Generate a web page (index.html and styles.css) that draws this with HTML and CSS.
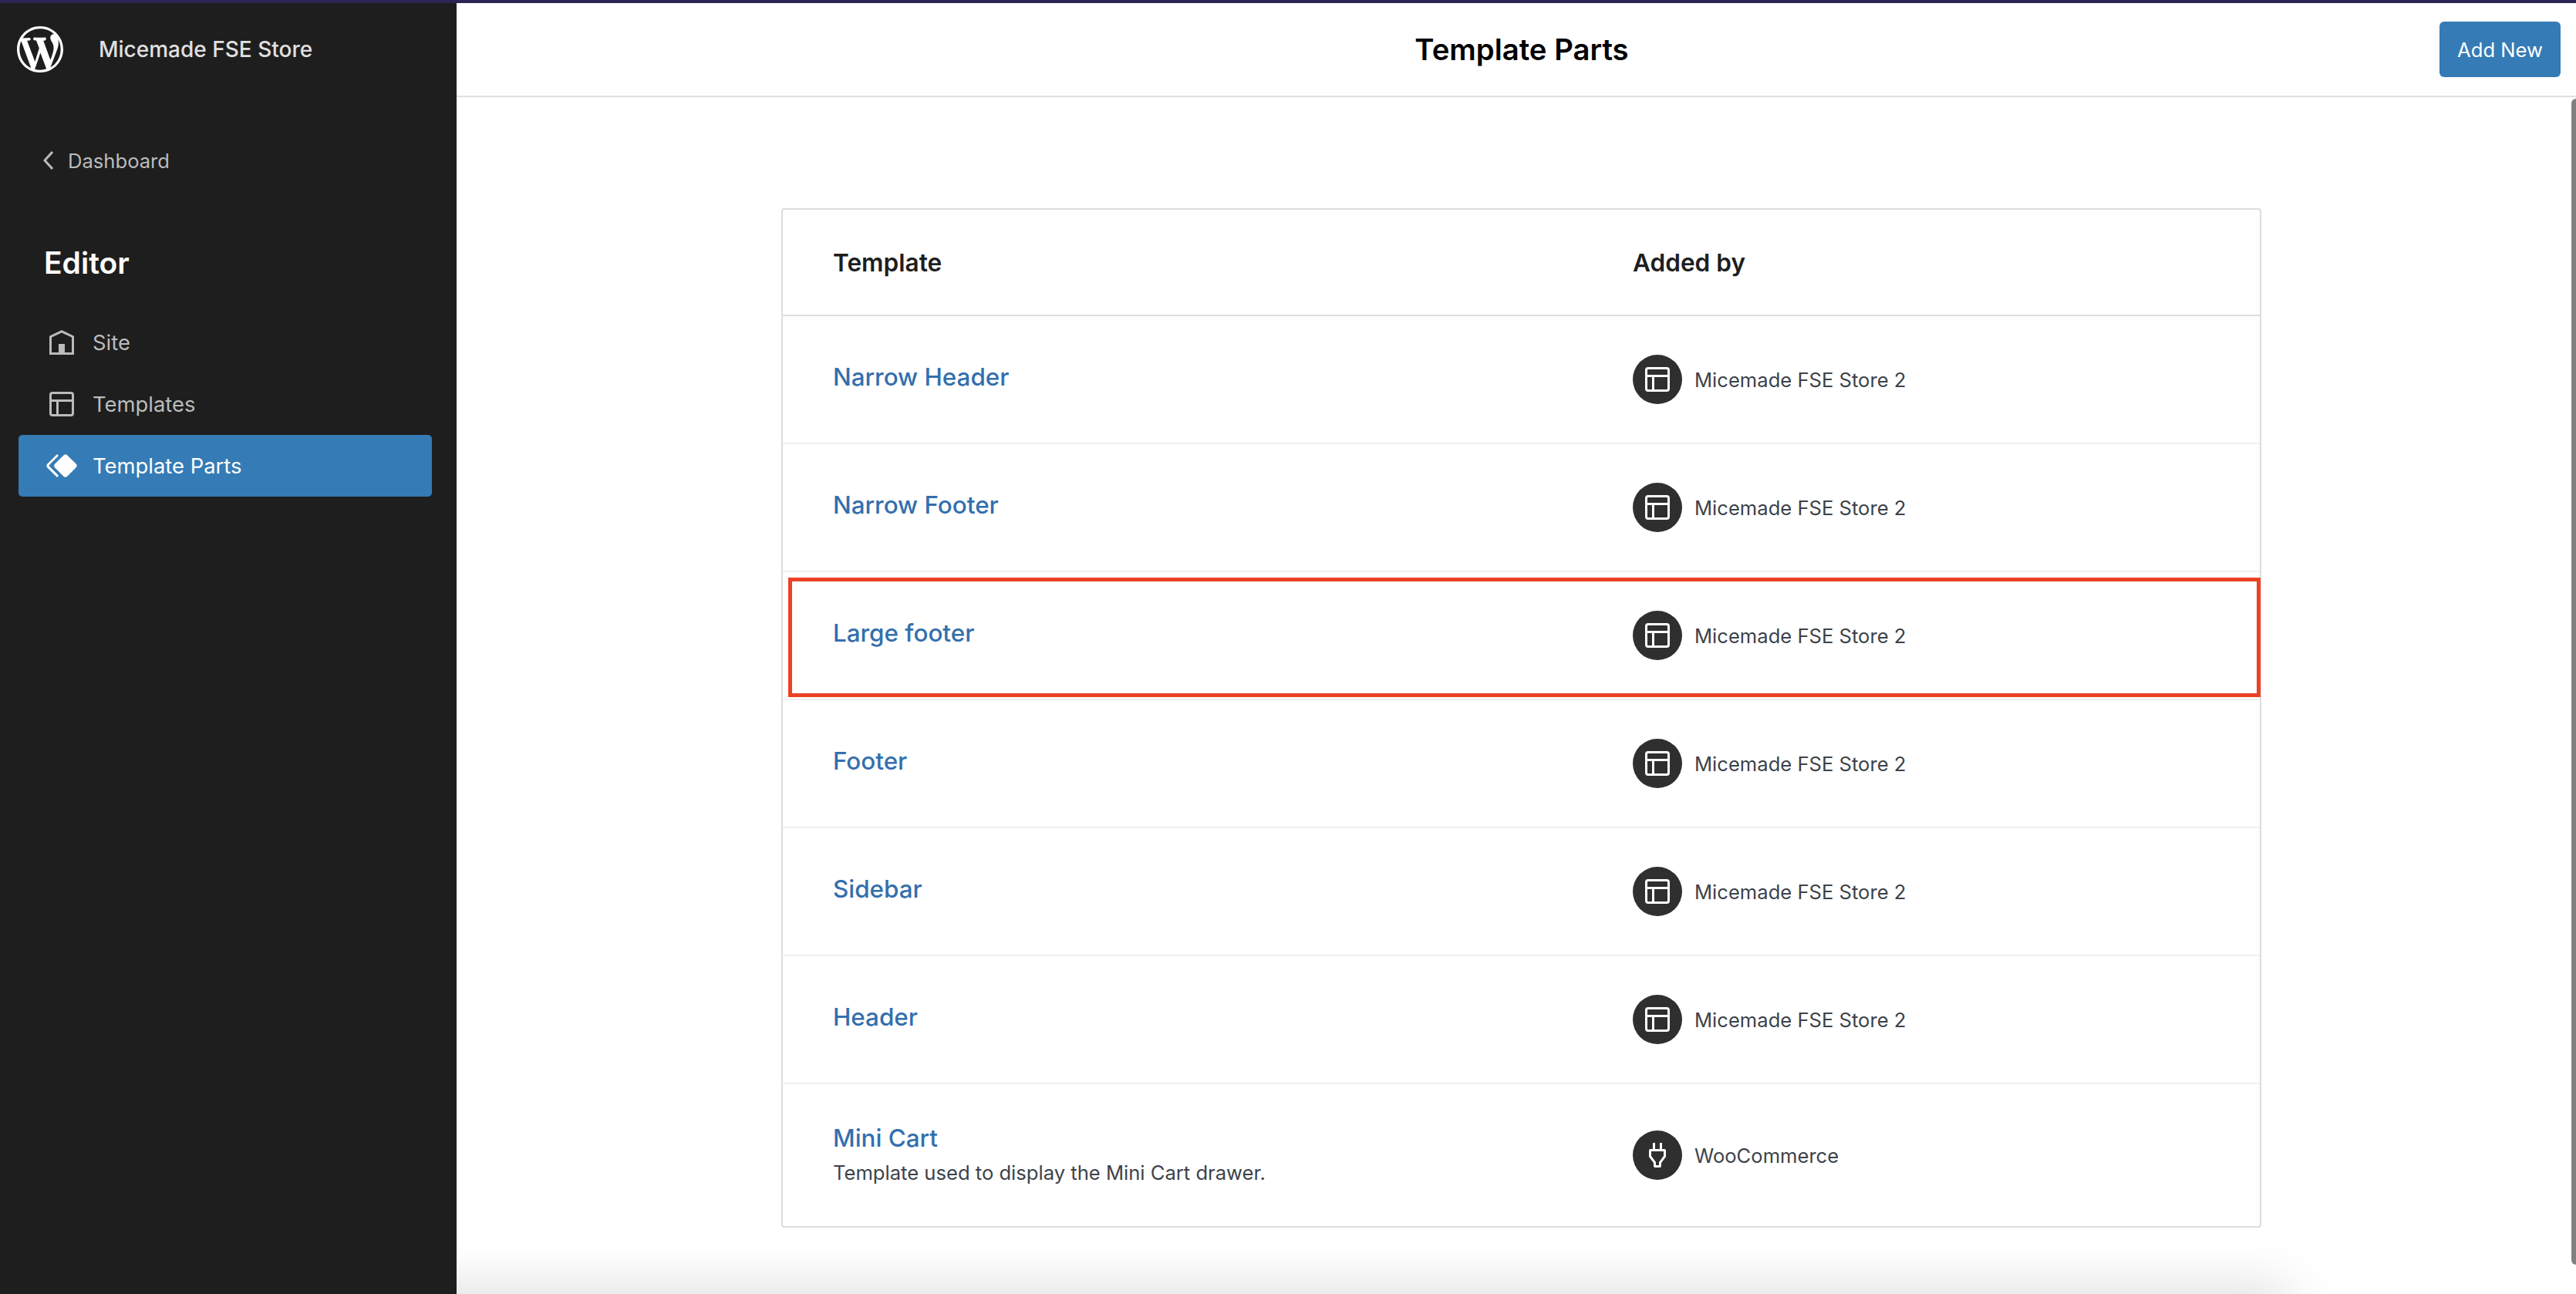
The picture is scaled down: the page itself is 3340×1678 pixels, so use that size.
FILE: index.html
```html
<!DOCTYPE html>
<html lang="en">
<head>
    <meta charset="UTF-8">
    <meta name="viewport" content="width=device-width, initial-scale=1.0">
    <title>Template Parts</title>
    <link rel="stylesheet" href="styles.css">
</head>
<body>
    <div class="top-strip"></div>
    <div class="frame">
        <aside class="sidebar">
            <div class="site-head">
                <svg class="wp-logo" viewBox="0 0 20 20">
                    <path d="M20 10c0-5.51-4.49-10-10-10C4.48 0 0 4.49 0 10c0 5.52 4.48 10 10 10 5.51 0 10-4.48 10-10zM7.78 15.37L4.37 6.22c.55-.02 1.17-.08 1.17-.08.5-.06.44-1.13-.06-1.11 0 0-1.45.11-2.37.11-.18 0-.37 0-.58-.01C4.12 2.69 6.87 1.11 10 1.11c2.33 0 4.45.87 6.05 2.34-.68-.11-1.65.39-1.65 1.58 0 .74.45 1.36.9 2.1.35.61.55 1.36.55 2.46 0 1.49-1.4 5-1.4 5l-3.03-8.37c.54-.02.82-.17.82-.17.5-.05.44-1.25-.06-1.22 0 0-1.44.12-2.38.12-.87 0-2.33-.12-2.33-.12-.5-.03-.56 1.2-.06 1.22l.92.08 1.26 3.41zM17.41 10c.24-.64.74-1.87.43-4.25.7 1.29 1.05 2.71 1.05 4.25 0 3.29-1.73 6.24-4.4 7.78.97-2.59 1.94-5.2 2.92-7.78zM6.1 18.09C3.12 16.65 1.11 13.53 1.11 10c0-1.3.23-2.48.72-3.59C3.25 10.3 4.67 14.2 6.1 18.09zm4.03-6.63l2.58 6.98c-.86.29-1.76.45-2.71.45-.79 0-1.57-.11-2.29-.33.81-2.38 1.62-4.74 2.42-7.1z"/>
                </svg>
                <span class="site-name">Micemade FSE Store</span>
            </div>
            <a class="back-link">
                <svg class="icon" viewBox="0 0 24 24"><path d="M14.6 7l-1.2-1L8 12l5.4 6 1.2-1-4.6-5z"/></svg>
                Dashboard
            </a>
            <h2 class="sidebar-title">Editor</h2>
            <nav class="side-nav">
                <a class="nav-item">
                    <svg class="icon" viewBox="0 0 24 24"><path d="M12 4L4 7.9V20h16V7.9L12 4zm6.5 14.5H14V13h-4v5.5H5.5V8.8L12 5.7l6.5 3.1v9.7z"/></svg>
                    Site
                </a>
                <a class="nav-item">
                    <svg class="icon" viewBox="0 0 24 24"><path d="M18 5.5H6a.5.5 0 00-.5.5v3h13V6a.5.5 0 00-.5-.5zm.5 5H10v8h8a.5.5 0 00.5-.5v-7.5zm-10 0h-3V18a.5.5 0 00.5.5h2.5v-8zM6 4h12a2 2 0 012 2v12a2 2 0 01-2 2H6a2 2 0 01-2-2V6a2 2 0 012-2z"/></svg>
                    Templates
                </a>
                <a class="nav-item active">
                    <svg class="icon" viewBox="0 0 24 24"><path d="M21.3 10.8l-5.6-5.6c-.7-.7-1.8-.7-2.5 0l-5.6 5.6c-.7.7-.7 1.8 0 2.5l5.6 5.6c.3.3.8.5 1.2.5s.9-.2 1.2-.5l5.6-5.6c.8-.7.8-1.9.1-2.5zm-17.6 1L10 5.5l-1-1-6.3 6.3c-.7.7-.7 1.8 0 2.5L9 19.5l1.1-1.1-6.3-6.3c-.2 0-.2-.2-.1-.3z"/></svg>
                    Template Parts
                </a>
            </nav>
        </aside>

        <main class="main">
            <header class="main-header">
                <h1 class="page-title">Template Parts</h1>
                <button class="add-new">Add New</button>
            </header>
            <div class="content">
                <div class="parts-table">
                    <div class="row head-row">
                        <div>Template</div>
                        <div>Added by</div>
                    </div>
                    <div class="row">
                        <a class="part-name">Narrow Header</a>
                        <div class="added-by">
                            <span class="avatar"><svg class="icon" viewBox="0 0 24 24"><path d="M18 5.5H6a.5.5 0 00-.5.5v3h13V6a.5.5 0 00-.5-.5zm.5 5H10v8h8a.5.5 0 00.5-.5v-7.5zm-10 0h-3V18a.5.5 0 00.5.5h2.5v-8zM6 4h12a2 2 0 012 2v12a2 2 0 01-2 2H6a2 2 0 01-2-2V6a2 2 0 012-2z"/></svg></span>
                            Micemade FSE Store 2
                        </div>
                    </div>
                    <div class="row">
                        <a class="part-name">Narrow Footer</a>
                        <div class="added-by">
                            <span class="avatar"><svg class="icon" viewBox="0 0 24 24"><path d="M18 5.5H6a.5.5 0 00-.5.5v3h13V6a.5.5 0 00-.5-.5zm.5 5H10v8h8a.5.5 0 00.5-.5v-7.5zm-10 0h-3V18a.5.5 0 00.5.5h2.5v-8zM6 4h12a2 2 0 012 2v12a2 2 0 01-2 2H6a2 2 0 01-2-2V6a2 2 0 012-2z"/></svg></span>
                            Micemade FSE Store 2
                        </div>
                    </div>
                    <div class="row">
                        <a class="part-name">Large footer</a>
                        <div class="added-by">
                            <span class="avatar"><svg class="icon" viewBox="0 0 24 24"><path d="M18 5.5H6a.5.5 0 00-.5.5v3h13V6a.5.5 0 00-.5-.5zm.5 5H10v8h8a.5.5 0 00.5-.5v-7.5zm-10 0h-3V18a.5.5 0 00.5.5h2.5v-8zM6 4h12a2 2 0 012 2v12a2 2 0 01-2 2H6a2 2 0 01-2-2V6a2 2 0 012-2z"/></svg></span>
                            Micemade FSE Store 2
                        </div>
                        <div class="red-box"></div>
                    </div>
                    <div class="row">
                        <a class="part-name">Footer</a>
                        <div class="added-by">
                            <span class="avatar"><svg class="icon" viewBox="0 0 24 24"><path d="M18 5.5H6a.5.5 0 00-.5.5v3h13V6a.5.5 0 00-.5-.5zm.5 5H10v8h8a.5.5 0 00.5-.5v-7.5zm-10 0h-3V18a.5.5 0 00.5.5h2.5v-8zM6 4h12a2 2 0 012 2v12a2 2 0 01-2 2H6a2 2 0 01-2-2V6a2 2 0 012-2z"/></svg></span>
                            Micemade FSE Store 2
                        </div>
                    </div>
                    <div class="row">
                        <a class="part-name">Sidebar</a>
                        <div class="added-by">
                            <span class="avatar"><svg class="icon" viewBox="0 0 24 24"><path d="M18 5.5H6a.5.5 0 00-.5.5v3h13V6a.5.5 0 00-.5-.5zm.5 5H10v8h8a.5.5 0 00.5-.5v-7.5zm-10 0h-3V18a.5.5 0 00.5.5h2.5v-8zM6 4h12a2 2 0 012 2v12a2 2 0 01-2 2H6a2 2 0 01-2-2V6a2 2 0 012-2z"/></svg></span>
                            Micemade FSE Store 2
                        </div>
                    </div>
                    <div class="row">
                        <a class="part-name">Header</a>
                        <div class="added-by">
                            <span class="avatar"><svg class="icon" viewBox="0 0 24 24"><path d="M18 5.5H6a.5.5 0 00-.5.5v3h13V6a.5.5 0 00-.5-.5zm.5 5H10v8h8a.5.5 0 00.5-.5v-7.5zm-10 0h-3V18a.5.5 0 00.5.5h2.5v-8zM6 4h12a2 2 0 012 2v12a2 2 0 01-2 2H6a2 2 0 01-2-2V6a2 2 0 012-2z"/></svg></span>
                            Micemade FSE Store 2
                        </div>
                    </div>
                    <div class="row last-row">
                        <div class="part-cell">
                            <a class="part-name">Mini Cart</a>
                            <p class="part-desc">Template used to display the Mini Cart drawer.</p>
                        </div>
                        <div class="added-by">
                            <span class="avatar"><svg class="icon" viewBox="0 0 24 24"><path d="M10.5 4v4h3V4H15v4h1.5a1 1 0 011 1v4l-3 4v2a1 1 0 01-1 1h-3a1 1 0 01-1-1v-2l-3-4V9a1 1 0 011-1H9V4h1.5zm.5 12.5v2h2v-2l3-4v-3H8v3l3 4z"/></svg></span>
                            WooCommerce
                        </div>
                    </div>
                </div>
            </div>
            <div class="scroll-thumb"></div>
            <div class="bottom-shadow"></div>
        </main>
    </div>
</body>
</html>
```

FILE: styles.css
```css
* {
    box-sizing: border-box;
}
html, body {
    height: 100%;
}
body {
    margin: 0;
    display: flex;
    flex-direction: column;
    overflow: hidden;
    background: #fff;
    font-family: Inter, "Liberation Sans", sans-serif;
    font-size: 25.6px;
}
.top-strip {
    height: 4px;
    background: #2c2452;
}
.frame {
    flex: 1;
    display: flex;
    min-height: 0;
}
.icon {
    width: 48px;
    height: 48px;
    fill: currentColor;
    flex: none;
}

/* sidebar */
.sidebar {
    width: 592px;
    flex: none;
    background: #1e1e1e;
    color: #bbb;
}
.site-head {
    height: 120px;
    display: flex;
    align-items: center;
    padding-left: 22px;
    gap: 46px;
}
.wp-logo {
    width: 60px;
    height: 60px;
    fill: #fff;
}
.site-name {
    color: #e0e0e0;
    font-size: 28px;
    font-weight: 500;
}
.back-link {
    display: flex;
    align-items: center;
    height: 48px;
    margin-top: 60px;
    padding-left: 40px;
    gap: 0;
}
.sidebar-title {
    margin: 81px 0 0 57px;
    height: 56px;
    line-height: 56px;
    font-size: 39px;
    font-weight: 600;
    color: #fff;
}
.side-nav {
    margin: 35px 32px 0 24px;
}
.nav-item {
    display: flex;
    align-items: center;
    height: 80px;
    padding-left: 32px;
    gap: 16px;
    border-radius: 5px;
    font-size: 27.4px;
}
.nav-item.active {
    background: #357bb5;
    color: #fff;
}

/* main */
.main {
    flex: 1;
    min-width: 0;
    position: relative;
    overflow: hidden;
}
.main-header {
    height: 122px;
    display: grid;
    grid-template-columns: 1fr auto 1fr;
    align-items: center;
    padding: 0 20px 0 34px;
    border-bottom: 2px solid #e0e0e0;
}
.page-title {
    grid-column: 2;
    margin: 0;
    font-size: 38.3px;
    font-weight: 600;
    color: #000;
}
.add-new {
    grid-column: 3;
    justify-self: end;
    width: 157px;
    height: 72px;
    border: none;
    border-radius: 6px;
    background: #357bb5;
    color: #fff;
    font-family: inherit;
    font-size: 25.6px;
}
.content {
    padding: 144px 408px 0 421px;
}
.parts-table {
    border: 2px solid #ddd;
    border-radius: 4px;
}
.row {
    position: relative;
    display: grid;
    grid-template-columns: 1037px 1fr;
    align-items: center;
    height: 166px;
    padding-left: 65px;
    border-bottom: 2px solid #f0f0f0;
}
.head-row {
    height: 138px;
    border-bottom-color: #ddd;
    font-size: 31.6px;
    font-weight: 600;
    color: #1e1e1e;
}
.last-row {
    height: 184px;
    border-bottom: none;
}
.part-cell {
    padding-bottom: 4px;
}
.part-name {
    display: block;
    margin-bottom: 6px;
    font-size: 31.4px;
    font-weight: 500;
    color: #336fad;
}
.part-desc {
    margin: 10px 0 0;
    color: #3c434a;
}
.added-by {
    display: flex;
    align-items: center;
    gap: 16px;
    color: #3c434a;
}
.avatar {
    width: 64px;
    height: 64px;
    border-radius: 50%;
    background: #2f2f2f;
    color: #fff;
    display: flex;
    align-items: center;
    justify-content: center;
}
/* annotation drawn over the "Large footer" row */
.red-box {
    position: absolute;
    top: 7px;
    bottom: 2px;
    left: 7px;
    right: -1px;
    border: 5px solid #ec4125;
}
.scroll-thumb {
    position: absolute;
    top: 124px;
    right: 0;
    width: 6px;
    height: 1512px;
    background: #808080;
    border-radius: 6px 0 0 6px;
}
.bottom-shadow {
    position: absolute;
    left: -200px;
    right: 370px;
    top: 100%;
    height: 40px;
    box-shadow: 0 0 70px rgba(0, 0, 0, 0.2);
}
```
